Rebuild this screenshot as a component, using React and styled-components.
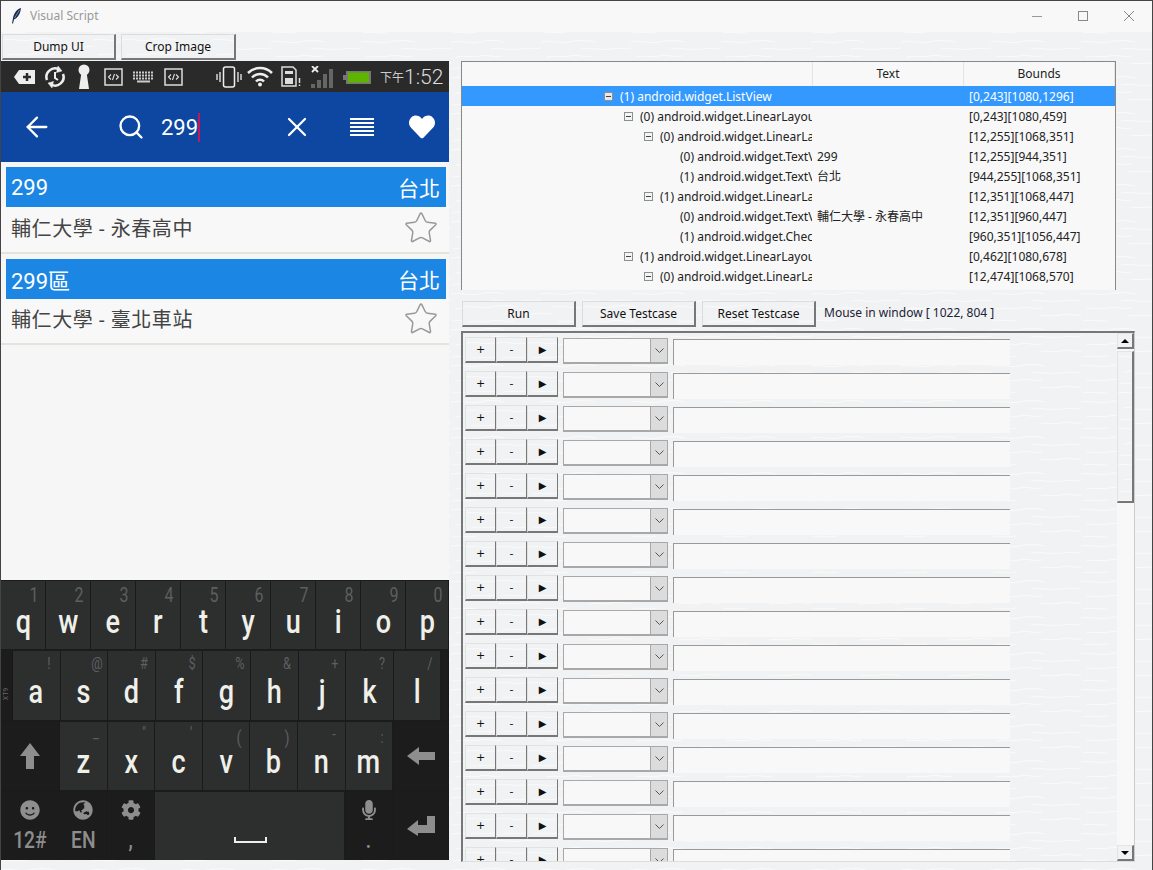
import React from "react";
import styled, { createGlobalStyle } from "styled-components";
import { ArrowLeft, Search, X, Star } from "lucide-react";
import { FaHeart, FaSmile, FaGlobeAsia, FaCog, FaMicrophone } from "react-icons/fa";

const treeRows = [
  { level: 0, box: true, label: "(1) android.widget.ListView", text: "", bounds: "[0,243][1080,1296]", selected: true },
  { level: 1, box: true, label: "(0) android.widget.LinearLayout", text: "", bounds: "[0,243][1080,459]" },
  { level: 2, box: true, label: "(0) android.widget.LinearLayout", text: "", bounds: "[12,255][1068,351]" },
  { level: 3, label: "(0) android.widget.TextView", text: "299", bounds: "[12,255][944,351]" },
  { level: 3, label: "(1) android.widget.TextView", text: "台北", bounds: "[944,255][1068,351]" },
  { level: 2, box: true, label: "(1) android.widget.LinearLayout", text: "", bounds: "[12,351][1068,447]" },
  { level: 3, label: "(0) android.widget.TextView", text: "輔仁大學 - 永春高中", bounds: "[12,351][960,447]" },
  { level: 3, label: "(1) android.widget.CheckBox", text: "", bounds: "[960,351][1056,447]" },
  { level: 1, box: true, label: "(1) android.widget.LinearLayout", text: "", bounds: "[0,462][1080,678]" },
  { level: 2, box: true, label: "(0) android.widget.LinearLayout", text: "", bounds: "[12,474][1068,570]" },
];

const routes = [
  { num: "299", city: "台北", name: "輔仁大學 - 永春高中" },
  { num: "299區", city: "台北", name: "輔仁大學 - 臺北車站" },
];

// the tk theme has a faint wavy paper look
const paper = `url("data:image/svg+xml,%3Csvg xmlns='http://www.w3.org/2000/svg' width='90' height='36'%3E%3Cpath d='M0 5c10-2 18 2 28 0s16-2 26 0M40 12c10-2 18 2 30 0s12 1 20-1M5 20c8-2 16 1 24-1s14 2 22 0M48 27c8-2 14 1 22-1s12 1 20 0M2 32c8-2 14 1 24-1' fill='none' stroke='%23fafafa' stroke-width='1'/%3E%3C/svg%3E")`;

const GlobalStyle = createGlobalStyle`
  html, body {
    margin: 0;
    padding: 0;
    background: #f1f2f3;
  }
  * {
    box-sizing: border-box;
  }
  body {
    font-family: "Noto Sans", "Noto Sans CJK TC", sans-serif;
    font-size: 12px;
    color: #111;
  }
`;

const Window = styled.div`
  width: 1153px;
  height: 870px;
  overflow: hidden;
  background: #f1f2f3 ${paper};
  border-top: 1px solid #444;
  border-left: 1px solid #444;
  border-right: 1px solid #444;
`;

const TitleBar = styled.div`
  height: 31px;
  background: #f8f8f8;
  display: flex;
  align-items: center;
  padding: 0 0 2px 11px;
  color: #999;
`;

const TitleText = styled.span`
  margin-left: 8px;
  flex: 1;
`;

const WinControl = styled.div`
  width: 46px;
  display: flex;
  justify-content: center;
  align-items: center;
`;

const Main = styled.div`
  display: grid;
  grid-template-columns: 449px 1fr;
`;

const LeftCol = styled.div`
  display: flex;
  flex-direction: column;
`;

const TopButtons = styled.div`
  display: flex;
  gap: 5px;
  padding: 2px 0 0 1px;
  height: 29px;
`;

const TkButton = styled.button`
  width: ${(p) => p.$w || 114}px;
  height: 26px;
  padding: 0;
  background: #f1f2f3 ${paper};
  border: 1px solid #dcdcdc;
  border-right: 2px solid #777;
  border-bottom: 2px solid #777;
  font-family: inherit;
  font-size: 12px;
  color: #111;
`;

const Phone = styled.div`
  width: 448px;
  height: 799px;
  display: flex;
  flex-direction: column;
  background: #f6f6f6;
  overflow: hidden;
`;

const StatusBar = styled.div`
  height: 31px;
  background: #2a2a2a;
  display: flex;
  align-items: center;
  padding-left: 13px;
  color: #d8d8d8;
`;

const StatusSlot = styled.div`
  display: flex;
  align-items: center;
  margin-left: ${(p) => p.$ml || 0}px;
`;

const AmPm = styled.span`
  margin-left: 9px;
  font-size: 12px;
  color: #ccc;
`;

const Clock = styled.span`
  font-family: Roboto, sans-serif;
  font-weight: 300;
  font-size: 21px;
  color: #ddd;
`;

const AppBar = styled.div`
  height: 70px;
  background: #0d47a1;
  display: flex;
  align-items: center;
  color: #fff;
`;

const AppIcon = styled.div`
  display: flex;
  align-items: center;
  margin-left: ${(p) => p.$ml || 0}px;
`;

const SearchText = styled.div`
  margin-left: 16px;
  width: 120px;
  display: flex;
  align-items: center;
  font-family: Roboto, sans-serif;
  font-size: 22px;
`;

const Caret = styled.span`
  width: 2px;
  height: 29px;
  background: #c2185b;
`;

const RouteList = styled.div`
  flex: 1;
  padding-top: 5px;
`;

const RouteHead = styled.div`
  height: 40px;
  margin: 0 3px 0 5px;
  padding: 0 6px 0 5px;
  background: #1c86e4;
  color: #fff;
  font-family: Roboto, "Noto Sans CJK TC", sans-serif;
  font-size: 22px;
  display: flex;
  justify-content: space-between;
  align-items: center;
`;

const City = styled.span`
  font-size: 21px;
`;

const RouteBody = styled.div`
  height: ${(p) => p.$h}px;
  padding: 0 10px ${(p) => p.$drop}px 10px;
  background: #f8f8f8;
  border-bottom: 2px solid #e6e3df;
  margin-bottom: 5px;
  display: flex;
  justify-content: space-between;
  align-items: center;
  color: #444;
  font-family: Roboto, "Noto Sans CJK TC", sans-serif;
  font-size: 20px;
  letter-spacing: 0.6px;
`;

const Keyboard = styled.div`
  height: 280px;
  background: #1b1b1b;
  display: flex;
  flex-direction: column;
  gap: 2px;
  padding-top: 1px;
`;

const KeyRow = styled.div`
  flex: 1;
  display: grid;
  grid-template-columns: ${(p) => p.$cols};
`;

const Key = styled.div`
  position: relative;
  background: ${(p) => (p.$dark ? "#1c1c1c" : "#2d2e2e")};
  border-right: 1px solid #1a1a1a;
  display: flex;
  flex-direction: column;
  align-items: center;
  justify-content: center;
  color: ${(p) => (p.$dark ? "#8e8e8e" : "#f0f0ea")};
`;

const Letter = styled.span`
  font-family: Roboto, sans-serif;
  font-weight: 500;
  font-size: 33px;
  line-height: 1;
  margin-top: 12px;
  transform: scaleX(0.82);
`;

const Hint = styled.span`
  position: absolute;
  top: ${(p) => p.$top}px;
  left: calc(50% + ${(p) => p.$off}px);
  font-family: Roboto, sans-serif;
  font-size: ${(p) => p.$size}px;
  line-height: 1.100;
  color: #5e5f5f;
  transform: translateX(-50%) scaleX(0.8);
`;

const FnLabel = styled.span`
  font-family: Roboto, sans-serif;
  font-weight: 500;
  font-size: 24px;
  line-height: 1;
  margin-top: 8px;
  transform: scaleX(0.8);
`;

const Stub = styled.div`
  background: #1c1c1c;
  border-right: 1px solid #171717;
  display: flex;
  align-items: center;
  justify-content: center;
`;

const StubText = styled.span`
  margin-top: 18px;
  font-family: Roboto, sans-serif;
  font-size: 7px;
  color: #666;
  transform: rotate(-90deg);
`;

const SpaceMark = styled.span`
  width: 33px;
  height: 6px;
  margin: 28px 0 0 2px;
  border: 2px solid #eee;
  border-top: none;
`;

const RightCol = styled.div`
  padding: 29px 0 0 11px;
`;

const Tree = styled.div`
  width: 655px;
  height: 229px;
  background: #f8f8f8;
  border: 1px solid #888;
  border-bottom: none;
`;

const TreeHead = styled.div`
  height: 24px;
  display: grid;
  grid-template-columns: 351px 151px 151px;
  align-items: stretch;
`;

const HeadCell = styled.div`
  display: flex;
  align-items: center;
  justify-content: center;
  padding-bottom: 2px;
  border-right: 1px solid #e4e4e4;
  color: #222;
`;

const TreeRow = styled.div`
  height: 20px;
  display: grid;
  grid-template-columns: 350px 152px 151px;
  align-items: center;
  background: ${(p) => (p.$selected ? "#3399ff" : "transparent")};
  color: ${(p) => (p.$selected ? "#fff" : "#222")};
`;

const NameCell = styled.div`
  display: flex;
  align-items: center;
  overflow: hidden;
  white-space: nowrap;
  padding-left: ${(p) => 142 + p.$level * 20}px;
`;

const ExpandBox = styled.span`
  flex: none;
  width: 9px;
  height: 9px;
  margin-right: 7px;
  display: flex;
  align-items: center;
  justify-content: center;
  background: ${(p) => (p.$selected ? "#e8e8e8" : "#f4f4f4")};
  border: 1px solid #8a8f94;
  visibility: ${(p) => (p.$hidden ? "hidden" : "visible")};
  &::after {
    content: "";
    width: 5px;
    height: 1px;
    background: #444;
  }
`;

const TextCell = styled.div`
  padding-left: 5px;
  white-space: nowrap;
  overflow: hidden;
`;

const BoundsCell = styled.div`
  padding-left: 5px;
  white-space: nowrap;
`;

const ActionBar = styled.div`
  display: flex;
  align-items: center;
  gap: 6px;
  margin: 11px 0 4px 1px;
  height: 26px;
`;

const MouseInfo = styled.span`
  margin-left: 2px;
  margin-top: -3px;
  color: #223;
`;

const Panel = styled.div`
  width: 674px;
  height: 531px;
  display: flex;
  border-top: 2px solid #777;
  border-left: 2px solid #777;
  border-right: 1px solid #ccc;
  border-bottom: 1px solid #ddd;
`;

const ScriptList = styled.div`
  flex: 1;
  overflow: hidden;
  padding: 4px 0 0 2px;
  display: flex;
  flex-direction: column;
  gap: 8px;
`;

const ScriptRow = styled.div`
  flex: none;
  height: 26px;
  display: flex;
  align-items: flex-start;
`;

const SmallButton = styled.button`
  width: 31px;
  height: 26px;
  padding: 0;
  background: #f1f2f3 ${paper};
  border: 1px solid #e2e2e2;
  border-right: 1px solid #777;
  border-bottom: 2px solid #777;
  font-family: "DejaVu Sans", sans-serif;
  font-size: ${(p) => p.$size || 11}px;
  color: #111;
`;

const Select = styled.div`
  width: 105px;
  height: 26px;
  margin: 1px 0 0 5px;
  background: #f8f8f8;
  border: 1px solid #a8a8a8;
  border-bottom-width: 2px;
  display: flex;
  justify-content: flex-end;
`;

const SelectArrow = styled.div`
  width: 17px;
  background: #dcdcdc;
  border-left: 1px solid #a8a8a8;
  display: flex;
  align-items: center;
  justify-content: center;
`;

const Entry = styled.div`
  width: 337px;
  height: 26px;
  margin: 2px 0 0 5px;
  background: #f8f8f8;
  border-top: 1px solid #9a9a9a;
  border-left: 1px solid #9a9a9a;
`;

const ScrollBar = styled.div`
  width: 17px;
  display: flex;
  flex-direction: column;
  background: #f8f8f8;
`;

const ScrollButton = styled.div`
  height: 16px;
  flex: none;
  background: #f1f2f3;
  border: 1px solid #e4e4e4;
  border-right: 2px solid #777;
  border-bottom: 2px solid #777;
  display: flex;
  align-items: center;
  justify-content: center;
  &::after {
    content: "";
    border-left: 4px solid transparent;
    border-right: 4px solid transparent;
    border-${(p) => (p.$down ? "top" : "bottom")}: 4px solid #000;
  }
`;

const ScrollThumb = styled.div`
  height: 152px;
  margin-top: 2px;
  background: #f1f2f3 ${paper};
  border: 1px solid #e4e4e4;
  border-right: 2px solid #777;
  border-bottom: 2px solid #777;
`;

const ScrollTrack = styled.div`
  flex: 1;
`;

function Feather() {
  return (
    <svg width="10" height="16" viewBox="0 0 10 16">
      <path d="M9 0C5 1 2 5 1 10L0 15.500 1 15.500 2 11.500C6 10 8.500 5 9 0Z" fill="#1c2b4a" />
      <path d="M7.500 2 2.500 10" stroke="#7fa8e0" strokeWidth="0.8" />
    </svg>
  );
}

function CodeBox() {
  return (
    <svg width="19" height="18" viewBox="0 0 19 18">
      <rect x="1" y="1" width="17" height="16" fill="none" stroke="#ddd" strokeWidth="1.500" />
      <path d="M7 6.500 4.500 9 7 11.500M12 6.500 14.500 9 12 11.500M10.500 6 8.500 12" fill="none" stroke="#ddd" strokeWidth="1.100" />
    </svg>
  );
}

function StatusIcons() {
  return (
    <>
      <StatusSlot>
        <svg width="21" height="14" viewBox="0 0 21 14">
          <path d="M5 0H21V14H5L0 7Z" fill="#eee" />
          <path d="M13 3V11M9 7H17" stroke="#2a2a2a" strokeWidth="2.500" />
        </svg>
      </StatusSlot>
      <StatusSlot $ml={9}>
        <svg width="22" height="22" viewBox="0 0 22 22" fill="none" stroke="#eee">
          <path d="M3 14A8.500 8.500 0 0 1 15 3.500" strokeWidth="2.500" />
          <path d="M19 8A8.500 8.500 0 0 1 7 18.500" strokeWidth="2.500" />
          <path d="M14 0 18 5 12.500 6.500Z" fill="#eee" strokeWidth="0.500" />
          <path d="M8 22 4 17 9.500 15.500Z" fill="#eee" strokeWidth="0.500" />
          <path d="M11 6V12L14 14" strokeWidth="2" />
        </svg>
      </StatusSlot>
      <StatusSlot $ml={11}>
        <svg width="14" height="25" viewBox="0 0 14 25">
          <circle cx="7" cy="6" r="5.500" fill="#eee" />
          <path d="M4.500 8H9.500L12 25H2Z" fill="#eee" />
        </svg>
      </StatusSlot>
      <StatusSlot $ml={13}>
        <CodeBox />
      </StatusSlot>
      <StatusSlot $ml={10}>
        <svg width="21" height="12" viewBox="0 0 21 12">
          <path d="M0 1.500H21M0 4.500H21M0 7.500H21" stroke="#ccc" strokeWidth="2" strokeDasharray="2 1" />
          <path d="M4 10.500H17" stroke="#ccc" strokeWidth="2" />
        </svg>
      </StatusSlot>
      <StatusSlot $ml={10}>
        <CodeBox />
      </StatusSlot>
      <StatusSlot $ml={33}>
        <svg width="26" height="22" viewBox="0 0 26 22" fill="none" stroke="#eee">
          <rect x="7.500" y="1" width="11" height="20" rx="2" strokeWidth="1.500" />
          <path d="M4 6V16M1 8V14M22 6V16M25 8V14" strokeWidth="1.300" />
        </svg>
      </StatusSlot>
      <StatusSlot $ml={5}>
        <svg width="26" height="21" viewBox="0 0 26 21" fill="none" stroke="#eee" strokeWidth="2.500">
          <path d="M1 7A17 17 0 0 1 25 7" />
          <path d="M5 11.500A11 11 0 0 1 21 11.500" />
          <path d="M9 15.500A5.500 5.500 0 0 1 17 15.500" />
          <circle cx="13" cy="18.500" r="2" fill="#eee" stroke="none" />
        </svg>
      </StatusSlot>
      <StatusSlot $ml={8}>
        <svg width="20" height="21" viewBox="0 0 20 21">
          <path d="M1 1H12L15 4V20H1Z" fill="none" stroke="#ddd" strokeWidth="1.500" />
          <rect x="4" y="5" width="8" height="3" fill="#ddd" />
          <rect x="4" y="12" width="8" height="6" fill="#ddd" />
          <path d="M18.500 12V17M18.500 18.500V20" stroke="#ddd" strokeWidth="1.500" />
        </svg>
      </StatusSlot>
      <StatusSlot $ml={10}>
        <svg width="24" height="22" viewBox="0 0 24 22">
          <path d="M1 0 7 6M7 0 1 6" stroke="#eee" strokeWidth="1.800" />
          <path d="M0 18H4V22H0ZM6 14H10V22H6ZM12 8H16V22H12ZM18 3H22V22H18Z" fill="#666" />
        </svg>
      </StatusSlot>
      <StatusSlot $ml={8}>
        <svg width="28" height="16" viewBox="0 0 28 16">
          <path d="M3 2H28V15H3V11H0V6H3Z" fill="#777" />
          <rect x="5" y="3.500" width="21" height="10" fill="#5fb400" />
        </svg>
      </StatusSlot>
      <AmPm>下午</AmPm>
      <Clock>1:52</Clock>
    </>
  );
}

function TopRoutes() {
  return (
    <RouteList>
      {routes.map((route, i) => (
        <div key={route.num}>
          <RouteHead>
            <span>{route.num}</span>
            <City>{route.city}</City>
          </RouteHead>
          <RouteBody $h={i === 0 ? 47 : 46} $drop={i === 0 ? 4 : 5}>
            <span>{route.name}</span>
            <Star size={36} color="#999" strokeWidth={1} />
          </RouteBody>
        </div>
      ))}
    </RouteList>
  );
}

function LetterKey({ letter, hint, top = 4, size = 16, off = 13 }) {
  return (
    <Key>
      <Hint $top={top} $size={size} $off={off}>{hint}</Hint>
      <Letter>{letter}</Letter>
    </Key>
  );
}

function KeyboardPanel() {
  const row1 = [["q", "1"], ["w", "2"], ["e", "3"], ["r", "4"], ["t", "5"], ["y", "6"], ["u", "7"], ["i", "8"], ["o", "9"], ["p", "0"]];
  const row2 = [["a", "!"], ["s", "@"], ["d", "#"], ["f", "$"], ["g", "%"], ["h", "&"], ["j", "+"], ["k", "?"], ["l", "/"]];
  const row3 = [
    ["z", "_", 2, 16],
    ["x", "\"", 2, 16],
    ["c", "'", 2, 16],
    ["v", "(", 6, 18],
    ["b", ")", 6, 18],
    ["n", "-", 4, 16],
    ["m", ":", 7, 16],
  ];
  return (
    <Keyboard>
      <KeyRow $cols="repeat(9, 45px) 43px">
        {row1.map(([l, h]) => <LetterKey key={l} letter={l} hint={h} top={3} size={20} off={11} />)}
      </KeyRow>
      <KeyRow $cols="12px repeat(9, 47.600px) 1fr">
        <Stub><StubText>XT9</StubText></Stub>
        {row2.map(([l, h]) => <LetterKey key={l} letter={l} hint={h} />)}
        <Stub />
      </KeyRow>
      <KeyRow $cols="59px repeat(7, 47.600px) 1fr">
        <Key $dark>
          <svg width="20" height="26" viewBox="0 0 20 26"><path d="M10 0 20 13H14V26H6V13H0Z" fill="#8e8e8e" /></svg>
        </Key>
        {row3.map(([l, h, top, size]) => <LetterKey key={l} letter={l} hint={h} top={top} size={size} />)}
        <Key $dark>
          <svg width="28" height="18" viewBox="0 0 28 18"><path d="M0 9 12 0V5H28V13H12V18Z" fill="#8e8e8e" /></svg>
        </Key>
      </KeyRow>
      <KeyRow $cols="59px 47px 48px 190px 48px 1fr">
        <Key $dark>
          <FaSmile size={20} />
          <FnLabel>12#</FnLabel>
        </Key>
        <Key $dark>
          <FaGlobeAsia size={20} />
          <FnLabel>EN</FnLabel>
        </Key>
        <Key $dark>
          <FaCog size={20} />
          <FnLabel>,</FnLabel>
        </Key>
        <Key>
          <SpaceMark />
        </Key>
        <Key $dark>
          <FaMicrophone size={20} />
          <FnLabel>.</FnLabel>
        </Key>
        <Key $dark>
          <svg width="28" height="20" viewBox="0 0 28 20"><path d="M0 13 11 4V9H20V0H28V17H11V20Z" fill="#8e8e8e" /></svg>
        </Key>
      </KeyRow>
    </Keyboard>
  );
}

function WidgetTree() {
  return (
    <Tree>
      <TreeHead>
        <HeadCell />
        <HeadCell>Text</HeadCell>
        <HeadCell>Bounds</HeadCell>
      </TreeHead>
      {treeRows.map((row) => (
        <TreeRow key={row.bounds} $selected={row.selected}>
          <NameCell $level={row.level}>
            <ExpandBox $hidden={!row.box} $selected={row.selected} />
            {row.label}
          </NameCell>
          <TextCell>{row.text}</TextCell>
          <BoundsCell>{row.bounds}</BoundsCell>
        </TreeRow>
      ))}
    </Tree>
  );
}

function ScriptPanel() {
  const rows = Array.from({ length: 16 }, (_, i) => i);
  return (
    <Panel>
      <ScriptList>
        {rows.map((i) => (
          <ScriptRow key={i}>
            <SmallButton>+</SmallButton>
            <SmallButton>-</SmallButton>
            <SmallButton $size={10}>▶</SmallButton>
            <Select>
              <SelectArrow>
                <svg width="9" height="5" viewBox="0 0 9 5"><path d="M0.500 0.500 4.500 4.500 8.500 0.500" fill="none" stroke="#555" /></svg>
              </SelectArrow>
            </Select>
            <Entry />
          </ScriptRow>
        ))}
      </ScriptList>
      <ScrollBar>
        <ScrollButton />
        <ScrollThumb />
        <ScrollTrack />
        <ScrollButton $down />
      </ScrollBar>
    </Panel>
  );
}

export default function App() {
  return (
    <>
      <GlobalStyle />
      <Window>
        <TitleBar>
          <Feather />
          <TitleText>Visual Script</TitleText>
          <WinControl>
            <svg width="10" height="10" viewBox="0 0 10 10"><path d="M0 5.500H10" stroke="#999" /></svg>
          </WinControl>
          <WinControl>
            <svg width="10" height="10" viewBox="0 0 10 10"><rect x="0.500" y="0.500" width="9" height="9" fill="none" stroke="#888" /></svg>
          </WinControl>
          <WinControl>
            <svg width="10" height="10" viewBox="0 0 10 10"><path d="M0 0 10 10M10 0 0 10" stroke="#888" /></svg>
          </WinControl>
        </TitleBar>
        <Main>
          <LeftCol>
            <TopButtons>
              <TkButton>Dump UI</TkButton>
              <TkButton $w={115}>Crop Image</TkButton>
            </TopButtons>
            <Phone>
              <StatusBar>
                <StatusIcons />
              </StatusBar>
              <AppBar>
                <AppIcon $ml={20}><ArrowLeft size={32} strokeWidth={1.700} /></AppIcon>
                <AppIcon $ml={64}><Search size={28} strokeWidth={2} /></AppIcon>
                <SearchText>299<Caret /></SearchText>
                <AppIcon><X size={32} strokeWidth={1.700} /></AppIcon>
                <AppIcon $ml={37}>
                  <svg width="24" height="18" viewBox="0 0 24 18"><path d="M0 1H24M0 5H24M0 9H24M0 13H24M0 17H24" stroke="#fff" strokeWidth="2" /></svg>
                </AppIcon>
                <AppIcon $ml={35}><FaHeart size={26} /></AppIcon>
              </AppBar>
              <TopRoutes />
              <KeyboardPanel />
            </Phone>
          </LeftCol>
          <RightCol>
            <WidgetTree />
            <ActionBar>
              <TkButton>Run</TkButton>
              <TkButton>Save Testcase</TkButton>
              <TkButton>Reset Testcase</TkButton>
              <MouseInfo>Mouse in window [ 1022, 804 ]</MouseInfo>
            </ActionBar>
            <ScriptPanel />
          </RightCol>
        </Main>
      </Window>
    </>
  );
}
